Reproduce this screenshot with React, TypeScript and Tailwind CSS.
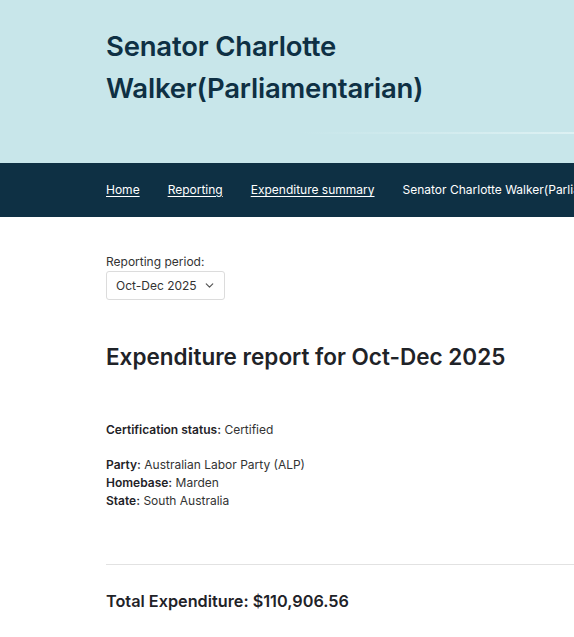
import React from 'react';
import { ChevronRight, ChevronDown } from 'lucide-react';

const crumbs = ['Home', 'Reporting', 'Expenditure summary'];

const details = [
  { label: 'Party', value: 'Australian Labor Party (ALP)' },
  { label: 'Homebase', value: 'Marden' },
  { label: 'State', value: 'South Australia' },
];

const App: React.FC = () => {
  return (
    <div
      className="min-h-[637px] w-full overflow-hidden bg-white text-[#1f2328]"
      style={{ fontFamily: 'Inter, "Noto Sans", sans-serif' }}
    >
      {/* Page banner */}
      <header className="relative h-[163px] bg-[#c8e6ea]">
        <h1 className="pl-[106px] pt-[25px] text-[27.5px] font-semibold leading-[42px] tracking-[-0.2px] text-[#0e3044]">
          Senator Charlotte
          <br />
          Walker(Parliamentarian)
        </h1>
        <div className="absolute left-[300px] right-0 top-[132px] h-[2px] bg-gradient-to-r from-transparent via-[#d2ebee] to-[#ddf1f3]" />
      </header>

      {/* Breadcrumbs */}
      <nav className="flex h-[54px] items-center whitespace-nowrap bg-[#0e3044] pl-[106px] text-[12px] text-white">
        {crumbs.map((c) => (
          <React.Fragment key={c}>
            <a href="#" className="underline underline-offset-2">
              {c}
            </a>
            <ChevronRight className="mx-[14px] h-[9px] w-[9px] text-[#a9b8c2]" strokeWidth={2} />
          </React.Fragment>
        ))}
        <span>Senator Charlotte Walker(Parliamentarian)</span>
      </nav>

      <main className="pl-[106px]">
        <div className="pt-[36px]">
          <label className="block text-[12px] leading-[18px] text-[#333]">Reporting period:</label>
          <button className="flex h-[29px] items-center gap-[6px] rounded-[3px] border border-[#dcdcdc] bg-white pl-[9px] pr-[8px] text-[12px] text-[#333]">
            Oct-Dec 2025
            <ChevronDown className="h-[13px] w-[13px] text-[#555]" strokeWidth={2.2} />
          </button>
        </div>

        <h2 className="mt-[41px] text-[22.5px] font-semibold leading-[32px] text-[#1f2328]">
          Expenditure report for Oct-Dec 2025
        </h2>

        <p className="mt-[48px] text-[12px] leading-[18px] text-[#333]">
          <strong className="font-semibold text-[#1f2328]">Certification status:</strong> Certified
        </p>

        <div className="mt-[17px] text-[12px] leading-[18px] text-[#333]">
          {details.map((d) => (
            <p key={d.label}>
              <strong className="font-semibold text-[#1f2328]">{d.label}:</strong> {d.value}
            </p>
          ))}
        </div>

        <hr className="mt-[54px] border-t border-[#e2e2e2]" />

        <p className="mt-[23px] text-[16.25px] font-semibold leading-[26px] text-[#1f2328]">
          Total Expenditure: $110,906.56
        </p>
      </main>
    </div>
  );
};

export default App;
